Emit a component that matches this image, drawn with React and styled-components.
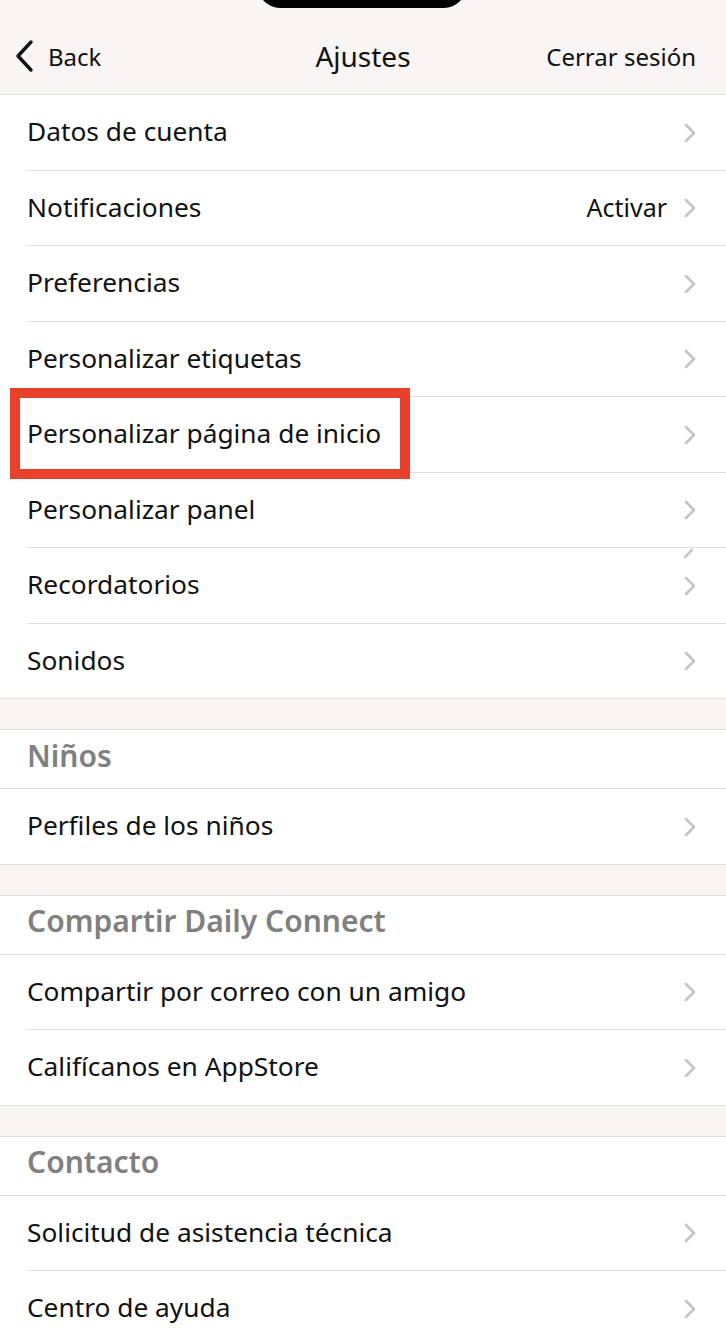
import React from 'react';
import styled, { createGlobalStyle } from 'styled-components';

const GlobalStyle = createGlobalStyle`
  html, body {
    margin: 0;
    padding: 0;
    background: #ffffff;
  }
  body {
    font-family: "Noto Sans", Lato, "Liberation Sans", sans-serif;
    -webkit-font-smoothing: antialiased;
  }
`

const PAGE = styled.div`
  position: relative;
  width: 726px;
  height: 1344px;
  overflow: hidden;
  background: #ffffff;
  color: #111111;
`
const NOTCH = styled.div`
  position: absolute;
  top: -20px;
  left: 258px;
  width: 208px;
  height: 28px;
  background: #000000;
  border-radius: 0 0 22px 22px;
`
const NAVBAR = styled.div`
  display: grid;
  grid-template-columns: 1fr auto 1fr;
  align-items: center;
  height: 95px;
  padding: 18px 30px 0 30px;
  box-sizing: border-box;
  background: #f8f5f4;
  border-bottom: 1px solid #e2e0df;
`
const BACK = styled.div`
  display: flex;
  align-items: center;
  gap: 14px;
  margin-left: -16px;
  font-size: 24px;
  color: #111111;
`
const TITLE = styled.div`
  font-size: 28px;
  color: #111111;
  text-align: center;
`
const LOGOUT = styled.div`
  font-size: 24px;
  color: #111111;
  text-align: right;
`
const GAP = styled.div`
  height: 30px;
  background: #f8f5f4;
`
const SECTIONTITLE = styled.div`
  display: flex;
  align-items: center;
  height: 60px;
  box-sizing: border-box;
  padding: 0 0 8px 27px;
  font-size: 30px;
  font-weight: 600;
  color: #808080;
  border-top: 1px solid #e2e0df;
  border-bottom: 1px solid #e2e0df;
`
const ROW = styled.div`
  position: relative;
  display: flex;
  align-items: center;
  height: 75.5px;
  box-sizing: border-box;
  padding: 0 0 3px 27px;
  &::after {
    content: "";
    position: absolute;
    left: 27px;
    right: 0;
    bottom: 0;
    height: 1px;
    background: #e2e0df;
  }
  &:last-child::after {
    left: 0;
  }
`
const LABEL = styled.div`
  flex: 1;
  font-size: 26.3px;
  color: #111111;
  white-space: nowrap;
`
const VALUE = styled.div`
  font-size: 25px;
  color: #111111;
  margin-right: 16px;
`
const CHEVRON = styled.svg`
  width: 14px;
  height: 20px;
  margin: 3px 29px 0 0;
  flex: none;
`
const GLITCH = styled.svg`
  position: absolute;
  right: 30px;
  top: -1px;
  width: 14px;
  height: 12px;
`
const HIGHLIGHT = styled.div`
  position: absolute;
  left: 10px;
  top: 388px;
  width: 400px;
  height: 91px;
  box-sizing: border-box;
  border: 10px solid #e8412b;
`

function Chevron() {
  return (
    <CHEVRON viewBox="0 0 14 20">
      <path d="M3 2 L11 10 L3 18" fill="none" stroke="#c5c5c5" strokeWidth="2.6" strokeLinecap="round" strokeLinejoin="round" />
    </CHEVRON>
  )
}

function Row(props) {
  return (
    <ROW>
      <LABEL>{props.label}</LABEL>
      {props.value && <VALUE>{props.value}</VALUE>}
      <Chevron />
      {props.glitch && (
        <GLITCH viewBox="0 0 14 12">
          <path d="M3 10 L10 3" fill="none" stroke="#c5c5c5" strokeWidth="2.6" strokeLinecap="round" />
        </GLITCH>
      )}
    </ROW>
  )
}

const sections = [
  {
    rows: [
      { label: 'Datos de cuenta' },
      { label: 'Notificaciones', value: 'Activar' },
      { label: 'Preferencias' },
      { label: 'Personalizar etiquetas' },
      { label: 'Personalizar página de inicio' },
      { label: 'Personalizar panel' },
      { label: 'Recordatorios', glitch: true },
      { label: 'Sonidos' },
    ],
  },
  { title: 'Niños', rows: [{ label: 'Perfiles de los niños' }] },
  {
    title: 'Compartir Daily Connect',
    rows: [{ label: 'Compartir por correo con un amigo' }, { label: 'Califícanos en AppStore' }],
  },
  {
    title: 'Contacto',
    rows: [{ label: 'Solicitud de asistencia técnica' }, { label: 'Centro de ayuda' }],
  },
]

export default function App() {
  return (
    <PAGE>
      <GlobalStyle />
      <NAVBAR>
        <BACK>
          <svg width="20" height="34" viewBox="0 0 20 34">
            <path d="M17 3 L4 17 L17 31" fill="none" stroke="#111" strokeWidth="3.4" strokeLinecap="round" strokeLinejoin="round" />
          </svg>
          Back
        </BACK>
        <TITLE>Ajustes</TITLE>
        <LOGOUT>Cerrar sesión</LOGOUT>
      </NAVBAR>
      {sections.map((s, i) => (
        <React.Fragment key={i}>
          {i > 0 && <GAP />}
          {s.title && <SECTIONTITLE>{s.title}</SECTIONTITLE>}
          <div>
            {s.rows.map((r) => (
              <Row key={r.label} {...r} />
            ))}
          </div>
        </React.Fragment>
      ))}
      <NOTCH />
      <HIGHLIGHT />
    </PAGE>
  )
}
